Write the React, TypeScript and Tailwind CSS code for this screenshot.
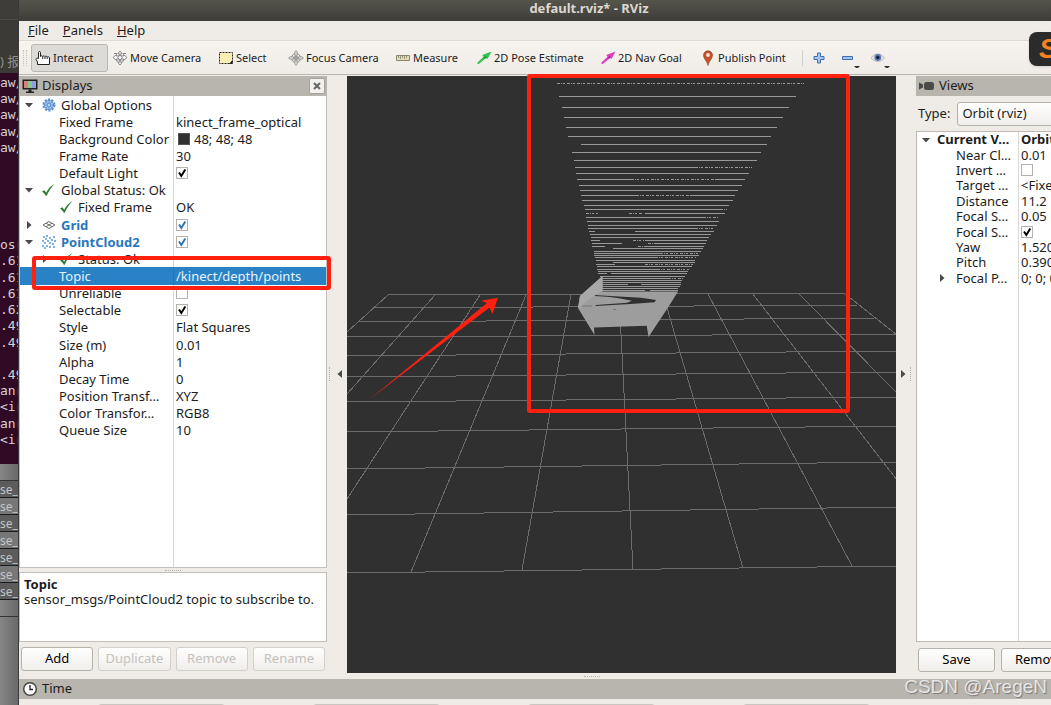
import type { ReactNode } from 'react'
import clsx from 'clsx'

type Property = {
  name: string
  value?: string
  checked?: boolean
  swatch?: boolean
  icon?: ReactNode
  arrow?: 'open' | 'closed'
  level?: number
  tone?: 'display' | 'selected' | 'bold'
}

function Arrow({ dir }: { dir: 'open' | 'closed' | 'left' }) {
  const d = { open: 'M1 3h8L5 7.500z', closed: 'M3 1v8l4.500-4z', left: 'M7 1v8L2.500 5z' }[dir]
  return (
    <svg viewBox="0 0 10 10" className="size-2.5 shrink-0 fill-[#4a4a48]">
      <path d={d} />
    </svg>
  )
}

function GearIcon() {
  return (
    <svg viewBox="0 0 14 14" className="size-3.5 shrink-0">
      <circle cx="7" cy="7" r="5.600" fill="none" stroke="#5b90d0" strokeWidth="1.800" strokeDasharray="2.200 1.320" />
      <circle cx="7" cy="7" r="4.600" fill="#a6c6ec" stroke="#4a84c8" strokeWidth=".8" />
      <path d="M7 2.500v9M2.500 7h9M3.800 3.800l6.400 6.400M10.200 3.800l-6.400 6.400" stroke="#4a84c8" strokeWidth=".7" />
      <circle cx="7" cy="7" r="1.500" fill="#dce9f7" stroke="#4a84c8" strokeWidth=".7" />
    </svg>
  )
}

function OkIcon() {
  return (
    <svg viewBox="0 0 14 14" className="size-3.5 shrink-0">
      <path d="M0 8.500l2.400-1.200 1.800 2.400C6 6 8.600 3 12.400 1 9.200 4.500 6.600 8 4.700 12.800h-.9C3 11 1.700 9.600 0 8.500z" fill="#2c7a33" />
    </svg>
  )
}

function GridIcon() {
  return (
    <svg viewBox="0 0 14 14" className="size-3.5 shrink-0" fill="none" stroke="#6b6b6b" strokeWidth="1">
      <path d="M1 7l6-3.500L13 7l-6 3.500zM4 5.200l6 3.500M10 5.200L4 8.700" />
    </svg>
  )
}

function CloudIcon() {
  const dots = [
    [2, 2], [5, 1], [8, 3], [12, 2], [4, 4], [10, 5], [1, 6], [6, 6], [13, 6],
    [3, 8], [8, 8], [11, 9], [1, 11], [5, 11], [8, 12], [12, 12], [3, 13],
  ]
  return (
    <svg viewBox="0 0 14 14" className="size-3.5 shrink-0 fill-[#3f8ed8]">
      {dots.map(([x, y]) => (
        <circle key={`${x}-${y}`} cx={x} cy={y} r="0.900" />
      ))}
    </svg>
  )
}

const displays: Property[] = [
  { name: 'Global Options', icon: <GearIcon />, arrow: 'open', level: 0 },
  { name: 'Fixed Frame', value: 'kinect_frame_optical' },
  { name: 'Background Color', value: '48; 48; 48', swatch: true },
  { name: 'Frame Rate', value: '30' },
  { name: 'Default Light', checked: true },
  { name: 'Global Status: Ok', icon: <OkIcon />, arrow: 'open', level: 0 },
  { name: 'Fixed Frame', value: 'OK', icon: <OkIcon /> },
  { name: 'Grid', icon: <GridIcon />, arrow: 'closed', level: 0, checked: true, tone: 'display' },
  { name: 'PointCloud2', icon: <CloudIcon />, arrow: 'open', level: 0, checked: true, tone: 'display' },
  { name: 'Status: Ok', icon: <OkIcon />, arrow: 'closed' },
  { name: 'Topic', value: '/kinect/depth/points', tone: 'selected' },
  { name: 'Unreliable', checked: false },
  { name: 'Selectable', checked: true },
  { name: 'Style', value: 'Flat Squares' },
  { name: 'Size (m)', value: '0.01' },
  { name: 'Alpha', value: '1' },
  { name: 'Decay Time', value: '0' },
  { name: 'Position Transf…', value: 'XYZ' },
  { name: 'Color Transfor…', value: 'RGB8' },
  { name: 'Queue Size', value: '10' },
]

const views: Property[] = [
  { name: 'Current V…', value: 'Orbit (rviz)', arrow: 'open', level: 0, tone: 'bold' },
  { name: 'Near Cl…', value: '0.01' },
  { name: 'Invert …', checked: false },
  { name: 'Target …', value: '<Fixed Frame>' },
  { name: 'Distance', value: '11.2' },
  { name: 'Focal S…', value: '0.05' },
  { name: 'Focal S…', checked: true },
  { name: 'Yaw', value: '1.5204' },
  { name: 'Pitch', value: '0.3904' },
  { name: 'Focal P…', value: '0; 0; 0', arrow: 'closed' },
]

function CheckBox({ label, checked, blue }: { label: string; checked: boolean; blue?: boolean }) {
  return (
    <span className="grid size-3">
      <input
        type="checkbox"
        aria-label={label}
        defaultChecked={checked}
        className="peer col-start-1 row-start-1 size-3 appearance-none border border-[#b5b2ae] bg-white"
      />
      <svg
        viewBox="0 0 12 12"
        className={clsx(
          'pointer-events-none invisible col-start-1 row-start-1 size-3 fill-none stroke-2 peer-checked:visible',
          blue ? 'stroke-[#2a76bd]' : 'stroke-black',
        )}
      >
        <path d="M3 5.500l2.300 3.500L9.300 2.500" />
      </svg>
    </span>
  )
}

function PropertyRow({ p }: { p: Property }) {
  const nested = p.level !== 0
  const selected = p.tone === 'selected'
  return (
    <tr className={clsx(selected && 'bg-[#2a82c6] text-[#e8f2fa]')}>
      <th
        scope="row"
        className={clsx(
          'overflow-hidden border-r p-0 text-left whitespace-nowrap',
          selected ? 'border-[#2676b6]' : 'border-[#dad8d5]',
          p.tone === 'display' || p.tone === 'bold' ? 'font-bold' : 'font-normal',
          p.tone === 'display' && 'text-[#2a76bd]',
        )}
      >
        <span className={clsx('flex items-center', nested ? 'pl-5' : 'pl-1')}>
          <span className={clsx('flex shrink-0', p.icon || !nested ? 'w-4' : 'w-[19px]')}>
            {p.arrow && <Arrow dir={p.arrow} />}
          </span>
          {p.icon && <span className={clsx('shrink-0 pl-0.5', nested ? 'w-[22px] pl-1' : 'w-[21px]')}>{p.icon}</span>}
          {p.name}
        </span>
      </th>
      <td className="overflow-hidden p-0 pl-0.5 whitespace-nowrap">
        <span className={clsx('flex items-center', p.tone === 'bold' && 'font-bold')}>
          {p.swatch && <span className="mr-1 ml-0.5 size-3 border border-[#555] bg-[#303030]" />}
          {p.checked !== undefined && <CheckBox label={p.name} checked={p.checked} blue={p.tone === 'display'} />}
          {p.value}
        </span>
      </td>
    </tr>
  )
}

function PushButton({ children, disabled, className }: { children: ReactNode; disabled?: boolean; className?: string }) {
  return (
    <button
      disabled={disabled}
      className={clsx(
        'h-6 rounded-[3px] border bg-linear-to-b from-white to-[#f0eeeb]',
        disabled ? 'border-[#d3d0cb] text-[#c4c1bc]' : 'border-[#b5b1ab] text-black',
        className,
      )}
    >
      {children}
    </button>
  )
}

function HandIcon() {
  return (
    <svg viewBox="0 0 16 16" className="size-4 shrink-0" fill="#fff" stroke="#222" strokeWidth="1" strokeLinejoin="round">
      <path d="M3.500 8.500V2.500c0-1.300 2-1.300 2 0V6.500c.3-1 1.800-1 2.200 0 .5-.8 2-.8 2.300.2.500-.7 2-.6 2.200.4.600-.7 2.300-.4 2.300.8v6.600H2.500V12L1.300 9.800c-.8-1 .5-2.200 1.300-1.500z" />
      <path d="M7.700 6.500V9M10 6.800V9M12.200 7.200V9" />
    </svg>
  )
}

function MoveIcon() {
  return (
    <svg viewBox="0 0 16 16" className="size-4 shrink-0" fill="#fff" stroke="#858585" strokeWidth="1">
      <path d="M8 1l2.200 2.700H8.700V6h2.800V4.500L15 7.500l-3.500 3V9H8.700v3.300h1.500L8 15l-2.200-2.700h1.500V9H4.500v1.500L1 7.500l3.500-3V6h2.800V3.700H5.800z" />
      <path d="M2 3.500h3M11 3.500h3M4.500 11h1.500M10 11h1.500" />
      <circle cx="8" cy="7.500" r="2" />
    </svg>
  )
}

function SelectIcon() {
  return (
    <svg viewBox="0 0 16 16" className="size-4 shrink-0">
      <path d="M1.500 2.500h13v11h-13z" fill="#f8efb4" stroke="#222" strokeDasharray="2 1" />
      <path d="M14.500 10v4H11z" fill="#222" />
    </svg>
  )
}

function FocusIcon() {
  return (
    <svg viewBox="0 0 16 16" className="size-4 shrink-0" fill="none" stroke="#8d8d8d" strokeWidth="1">
      <circle cx="8" cy="8" r="4.500" />
      <circle cx="8" cy="8" r="1.800" fill="#aaa" />
      <path d="M8 .5L9.200 2v3.500H6.800V2zM8 15.500L6.800 14v-3.500h2.400V14zM.5 8L2 6.800h3.500v2.400H2zM15.500 8L14 9.200h-3.500V6.800H14z" fill="#ddd" strokeWidth=".8" />
    </svg>
  )
}

function MeasureIcon() {
  return (
    <svg viewBox="0 0 16 16" className="size-4 shrink-0">
      <path d="M1.500 5.500h13v5h-13z" fill="#e2dab2" stroke="#8a8670" />
      <path d="M3.500 6v2M5.500 6v3M7.500 6v2M9.500 6v3M11.500 6v2" stroke="#8a8670" strokeWidth=".8" />
    </svg>
  )
}

function PoseIcon({ className }: { className: string }) {
  return (
    <svg viewBox="0 0 16 16" className={clsx('size-4 shrink-0', className)}>
      <path d="M15.500 1.500L11.500 9 10 8l-7.500 6.200L1 13l6.500-6.300L6.300 5z" />
      <path d="M7 8.500l3-2.500.5 2z" fill="#000" fillOpacity=".35" />
    </svg>
  )
}

function PinIcon() {
  return (
    <svg viewBox="0 0 16 16" className="size-4 shrink-0">
      <path d="M8 15.500C7.500 11.500 3.500 9 3.500 5.300a4.500 4.500 0 019 0C12.500 9 8.500 11.500 8 15.500z" fill="#c4522a" stroke="#8e3516" strokeWidth=".6" />
      <circle cx="8" cy="5" r="1.900" fill="#f6e3da" />
    </svg>
  )
}

const tools = [
  { label: 'Interact', icon: <HandIcon />, width: 'w-[77px]', active: true },
  { label: 'Move Camera', icon: <MoveIcon />, width: 'w-[106px]' },
  { label: 'Select', icon: <SelectIcon />, width: 'w-[70px]' },
  { label: 'Focus Camera', icon: <FocusIcon />, width: 'w-[107px]' },
  { label: 'Measure', icon: <MeasureIcon />, width: 'w-[81px]' },
  { label: '2D Pose Estimate', icon: <PoseIcon className="fill-[#2fc350]" />, width: 'w-[124px]' },
  { label: '2D Nav Goal', icon: <PoseIcon className="fill-[#e03cc4]" />, width: 'w-[100px]' },
  { label: 'Publish Point', icon: <PinIcon />, width: 'w-[106px]' },
]

function Toolbar() {
  return (
    <div className="flex h-[35px] items-center border-t border-b border-t-[#dddad5] border-b-[#b9b6b1] bg-linear-to-b from-[#f7f4f0] to-[#efece7] pl-1 text-[11px]">
      <span className="mr-1 h-4 w-1 border-x border-dotted border-[#c5c2bd]" />
      {tools.map((t) => (
        <button
          key={t.label}
          className={clsx(
            'flex h-7 shrink-0 items-center gap-0.5 rounded-[3px] border pt-px pl-[3px] whitespace-nowrap',
            t.width,
            t.active ? 'border-[#bab7b2] bg-[#dddbd8]' : 'border-transparent',
          )}
        >
          {t.icon}
          {t.label}
        </button>
      ))}
      <span className="mr-2 h-4 border-l border-[#d0cdc8]" />
      <button aria-label="Add tool" className="w-[30px] pl-0.5">
        <svg viewBox="0 0 12 12" className="size-3">
          <path d="M4.500 1h3v3.500H11v3H7.500V11h-3V7.500H1v-3h3.500z" fill="#a5c6ee" stroke="#3c6fb4" />
        </svg>
      </button>
      <button aria-label="Remove tool" className="flex w-[30px]">
        <svg viewBox="0 0 20 20" className="size-5">
          <path d="M1.500 8.500h10v3h-10z" fill="#a5c6ee" stroke="#3c6fb4" />
          <path d="M13 18h6l-3 3z" fill="#333" />
        </svg>
      </button>
      <button aria-label="Tool visibility" className="flex">
        <svg viewBox="0 0 20 20" className="size-5">
          <path d="M0 10c3.500-5.500 10-5.500 13.500 0C10 14.500 3.500 14.500 0 10z" fill="#e4e4e4" stroke="#aaa" strokeWidth=".7" />
          <circle cx="6.800" cy="9.500" r="3.400" fill="#5d78b4" />
          <circle cx="6.800" cy="9.500" r="1.700" fill="#14204c" />
          <path d="M13 18h6l-3 3z" fill="#333" />
        </svg>
      </button>
    </div>
  )
}

// Ground plane, 10 x 10 cells as seen by the orbit camera: [x1, y1, x2, y2]
const gridLines = [
  [388, 295, 844, 293],
  [374, 308, 857, 305],
  [359, 322, 874, 318],
  [347, 337, 897, 334],
  [347, 356, 897, 351],
  [347, 377, 897, 372],
  [347, 402, 897, 397],
  [347, 432, 897, 426],
  [347, 469, 897, 462],
  [347, 515, 897, 507],
  [347, 573, 897, 566],
  [388, 295, 347, 332],
  [435, 295, 347, 394],
  [480, 295, 347, 499],
  [526, 295, 411, 572],
  [571, 294, 522, 570],
  [619, 294, 633, 569],
  [663, 294, 743, 568],
  [708, 294, 852, 566],
  [752, 293, 897, 480],
  [798, 293, 897, 393],
  [844, 293, 897, 335],
]

// Solid scan rows of the point cloud: [y, x1, x2]
const scanRows = [
  [96, 559, 796], [107, 562, 789], [117, 564, 783], [127, 566, 777], [136, 568, 771],
  [144, 581, 767], [152, 572, 761], [160, 574, 757], [167, 575, 695], [173, 576, 749],
  [179, 577, 631], [179, 716, 745], [185, 579, 742], [190, 580, 738], [195, 581, 636],
  [195, 690, 735], [200, 582, 733], [205, 584, 729], [209, 585, 720], [213, 645, 725],
  [217, 586, 703], [221, 587, 719], [225, 588, 717], [228, 588, 695], [231, 589, 595],
  [231, 635, 714], [234, 590, 711], [237, 591, 709], [240, 591, 600], [240, 645, 707],
  [243, 592, 622], [243, 655, 706], [246, 592, 605], [246, 646, 704], [248, 613, 703],
  [251, 594, 701], [253, 594, 660], [255, 594, 699], [257, 595, 655], [260, 596, 695],
  [262, 613, 695], [264, 596, 615], [266, 597, 692], [269, 597, 657], [271, 598, 688],
  [273, 598, 607], [273, 611, 687], [276, 600, 685], [278, 602, 668], [280, 602, 682],
  [282, 602, 681], [284, 602, 628], [284, 641, 681], [286, 602, 680], [288, 602, 678],
  [290, 602, 645], [290, 650, 678],
]

const brokenRows = [
  [83, 557, 804], [167, 695, 752], [179, 631, 716], [195, 636, 690], [209, 720, 727],
  [213, 586, 598], [213, 629, 643], [217, 703, 719], [228, 695, 714], [240, 633, 644],
  [243, 648, 655], [246, 638, 646], [253, 660, 699], [257, 655, 696], [264, 645, 694],
  [269, 657, 689], [278, 668, 683],
]

function Viewport() {
  return (
    <main className="relative min-h-0 min-w-0 flex-1 bg-[#303030]">
      <svg viewBox="347 76 549 597" preserveAspectRatio="xMidYMid slice" className="size-full">
        <g stroke="#6c6c6c" shapeRendering="crispEdges">
          {gridLines.map(([x1, y1, x2, y2], i) => (
            <line key={i} x1={x1} y1={y1} x2={x2} y2={y2} />
          ))}
        </g>
        <g stroke="#989898" transform="translate(0 .5)">
          {scanRows.map(([y, x1, x2], i) => (
            <line key={i} x1={x1} y1={y} x2={x2} y2={y} />
          ))}
          {brokenRows.map(([y, x1, x2], i) => (
            <line key={i} x1={x1} y1={y} x2={x2} y2={y} strokeDasharray="3 1 1 1 2 2" />
          ))}
        </g>
        <path
          d="M602.500 276L580 296l-2 12 16.500 27-.5-7.500 52.700-1.700 1.800 11.200 20-30.300L678 291.500h-75.500z"
          fill="#9d9d9d"
        />
        <path d="M602.500 276L580 296l-2 12 16.500-12.500 8-4.500z" fill="#a8a8a8" />
        <path
          d="M594.500 295l20 1.200 26.500 1.500 15 2.300-1.500 2.300-24 1.700-35 2 .2-1 31.300-2.300 5-2-12-2.200-10-1.500-14.500-1z"
          fill="#303030"
        />
        <path d="M582 306h10M613 309.500h3" stroke="#777" />
        <path d="M370 399L487 303l-6-2.200 17-3-5.500 16.200-3-6.500z" fill="#ff2010" />
      </svg>
      <div className="absolute -top-0.5 left-[180px] h-[339px] w-[323px] rounded-[3px] border-4 border-[#ff2010]" />
    </main>
  )
}

function DockHandle({ side }: { side: 'left' | 'right' }) {
  return (
    <div className="flex w-5 shrink-0 items-center justify-between px-0.5 pb-2">
      {side === 'right' && <Arrow dir="closed" />}
      <span className="h-3.5 w-1 border-l border-dotted border-[#b5b2ad]" />
      {side === 'left' && <Arrow dir="left" />}
    </div>
  )
}

function DockHeader({ icon, title, closable }: { icon: ReactNode; title: string; closable?: boolean }) {
  return (
    <header className="flex h-5 shrink-0 items-center gap-1 bg-[#b8b4ae] pl-[3px]">
      {icon}
      <h2>{title}</h2>
      {closable && (
        <button
          aria-label={`Close ${title}`}
          className="mr-0.5 ml-auto flex size-4 items-center justify-center rounded-[2px] border border-[#a5a19b] bg-[#f3f1ee]"
        >
          <svg viewBox="0 0 8 8" className="size-2 stroke-[#666] stroke-2">
            <path d="M1 1l6 6M7 1L1 7" />
          </svg>
        </button>
      )}
    </header>
  )
}

function DisplaysPanel() {
  return (
    <section className="flex w-[308px] shrink-0 flex-col">
      <DockHeader
        closable
        title="Displays"
        icon={
          <svg viewBox="0 0 16 16" className="size-4">
            <path d="M.5 1.500h15v10H.5z" fill="#222" />
            <path d="M2 3h4v7H2z" fill="#d9817a" />
            <path d="M6 3h4v7H6z" fill="#86c98e" />
            <path d="M10 3h4v7h-4z" fill="#8f9ee0" />
            <path d="M6.500 11.500h3v2h2.500v1.500H4v-1.500h2.500z" fill="#222" />
          </svg>
        }
      />
      <div className="relative flex flex-1 flex-col border border-t-0 border-[#c3c0bb] bg-white">
        <table className="h-[343px] w-full table-fixed border-separate border-spacing-0 leading-4">
          <colgroup>
            <col className="w-[154px]" />
            <col />
          </colgroup>
          <tbody>
            {displays.map((p, i) => (
              <PropertyRow key={i} p={p} />
            ))}
          </tbody>
        </table>
        <div className="w-[154px] flex-1 border-r border-[#dad8d5]" />
        <div className="absolute top-[160px] left-3 h-[34px] w-[299px] rounded-[3px] border-4 border-[#ff2010]" />
      </div>
      <div className="flex h-1 items-center justify-center">
        <span className="w-4 border-t border-dotted border-[#b5b2ad]" />
      </div>
      <div className="h-[70px] border border-[#c3c0bb] bg-white px-1 pt-1 leading-[15px]">
        <b>Topic</b>
        <p className="whitespace-nowrap">sensor_msgs/PointCloud2 topic to subscribe to.</p>
      </div>
      <div className="flex gap-[5px] px-0.5 pt-[5px] pb-2">
        <PushButton className="flex-1">Add</PushButton>
        <PushButton className="flex-1" disabled>Duplicate</PushButton>
        <PushButton className="flex-1" disabled>Remove</PushButton>
        <PushButton className="flex-1" disabled>Rename</PushButton>
      </div>
    </section>
  )
}

function ViewsPanel() {
  return (
    <section className="w-[135px] shrink-0 overflow-hidden">
      <div className="flex h-full w-[210px] flex-col">
        <DockHeader
          title="Views"
          icon={
            <svg viewBox="0 0 16 16" className="size-4 fill-[#4a4a48]">
              <path d="M0 4.500l4 2v3l-4 2z" />
              <rect x="5" y="4" width="10" height="8" rx="2.500" />
            </svg>
          }
        />
        <div className="flex h-[35px] shrink-0 items-center gap-[7px] pl-0.5">
          <label htmlFor="view-type">Type:</label>
          <select
            id="view-type"
            className="h-6 w-[120px] appearance-none rounded-[3px] border border-[#b5b1ab] bg-linear-to-b from-white to-[#f0eeeb] pl-1"
          >
            <option>Orbit (rviz)</option>
          </select>
        </div>
        <div className="flex flex-1 flex-col border border-[#c3b8b6] bg-white">
          <table className="h-[154px] w-full table-fixed border-separate border-spacing-0 leading-[15px]">
            <colgroup>
              <col className="w-[102px]" />
              <col />
            </colgroup>
            <tbody>
              {views.map((p, i) => (
                <PropertyRow key={i} p={p} />
              ))}
            </tbody>
          </table>
          <div className="w-[102px] flex-1 border-r border-[#dad8d5]" />
        </div>
        <div className="flex gap-1.5 px-0.5 pt-1.5 pb-[7px]">
          <PushButton className="w-[77px]">Save</PushButton>
          <PushButton className="w-[77px]">Remove</PushButton>
        </div>
      </div>
    </section>
  )
}

const terminalLines = [
  'aw/', 'aw/', 'aw/', 'aw/', 'aw/', '', '', '', '', '', 'osr', '.61', '.61', '.61', '.62', '.49', '.49', '',
  '.49', 'anr', '<ir', 'anr', '<ir',
]

function BackgroundWindows() {
  return (
    <aside className="flex w-[19px] shrink-0 flex-col overflow-hidden border-r border-[#3a3a3a] bg-linear-to-r from-[#868686] to-[#6a6a6a] whitespace-nowrap">
      <div className="h-5 border-b border-[#4c4b46] bg-[#3e3d39]" />
      <div className="h-[53px] bg-[#3b3a36] pt-8 text-[13px] text-[#8f8d87]">) 报</div>
      <div className="flex h-[391px] flex-col bg-[#300a24] pt-0.5 pb-4 font-['DejaVu_Sans_Mono','Liberation_Mono',monospace] text-[13px] text-[#d5cfd3]">
        {terminalLines.map((line, i) => (
          <div key={i} className="min-h-0 flex-1 leading-4">{line}</div>
        ))}
      </div>
      <div className="h-[17px] border-b border-[#333]" />
      {[0, 1, 2, 3, 4, 5, 6].map((i) => (
        <div
          key={i}
          className={clsx(
            'h-[17px] border-b border-[#1c1c1c] text-[12px] leading-[17px] text-[#c4c4c4]',
            i % 2 === 0 ? 'bg-[#5c5c5c]' : 'bg-[#777]',
          )}
        >
          se_l
        </div>
      ))}
      <div className="h-[17px] border-b border-[#333]" />
    </aside>
  )
}

export default function App() {
  return (
    <div className="relative flex h-screen overflow-hidden bg-[#efece7] font-['Noto_Sans','Noto_Sans_CJK_SC',sans-serif] text-[13px] text-[#1c1c1c]">
      <BackgroundWindows />
      <div className="flex min-w-0 flex-1 flex-col">
        <div className="h-[21px] shrink-0 bg-linear-to-b from-[#56554c] to-[#3d3c38] pl-[108px] text-center leading-4 font-bold text-[#dcd8cf]">
          default.rviz* - RViz
        </div>
        <nav className="flex h-[19px] shrink-0 items-center gap-[14px] pl-[9px]">
          <button><u>F</u>ile</button>
          <button><u>P</u>anels</button>
          <button><u>H</u>elp</button>
        </nav>
        <Toolbar />
        <div className="flex min-h-0 flex-1 pt-px">
          <DisplaysPanel />
          <DockHandle side="left" />
          <div className="flex min-w-0 flex-1 flex-col">
            <Viewport />
            <div className="flex h-1.5 shrink-0 items-center justify-center pr-[60px]">
              <span className="w-4 border-t border-dotted border-[#b5b2ad]" />
            </div>
          </div>
          <DockHandle side="right" />
          <ViewsPanel />
        </div>
        <DockHeader
          title="Time"
          icon={
            <svg viewBox="0 0 16 16" className="size-4">
              <circle cx="8" cy="8" r="6.300" fill="#fff" stroke="#444" strokeWidth="1.500" />
              <path d="M8 4v4.500h3" fill="none" stroke="#222" strokeWidth="1.300" />
            </svg>
          }
        />
        <footer className="flex h-1.5 shrink-0 gap-[88px] overflow-hidden pt-[5px] pl-[79px]">
          {['ROS Time', 'ROS Elapsed', 'Wall Time', 'Wall Elapsed'].map((label) => (
            <input key={label} readOnly aria-label={label} className="h-6 w-[127px] rounded-[3px] border border-[#c9c6c1] bg-white" />
          ))}
        </footer>
      </div>
      <div className="absolute top-8 right-0 flex h-[34px] w-[22px] items-center overflow-hidden rounded-l-lg bg-[#2b2b2b] pl-2.5 font-['Liberation_Sans',sans-serif] text-[28px] font-bold text-[#f58220] italic shadow">
        S
      </div>
      <div className="absolute right-1 bottom-1.5 font-['Liberation_Sans',sans-serif] text-[19px] leading-6 text-white/75 [text-shadow:1px_1px_1px_#777]">
        CSDN @AregeN
      </div>
    </div>
  )
}
